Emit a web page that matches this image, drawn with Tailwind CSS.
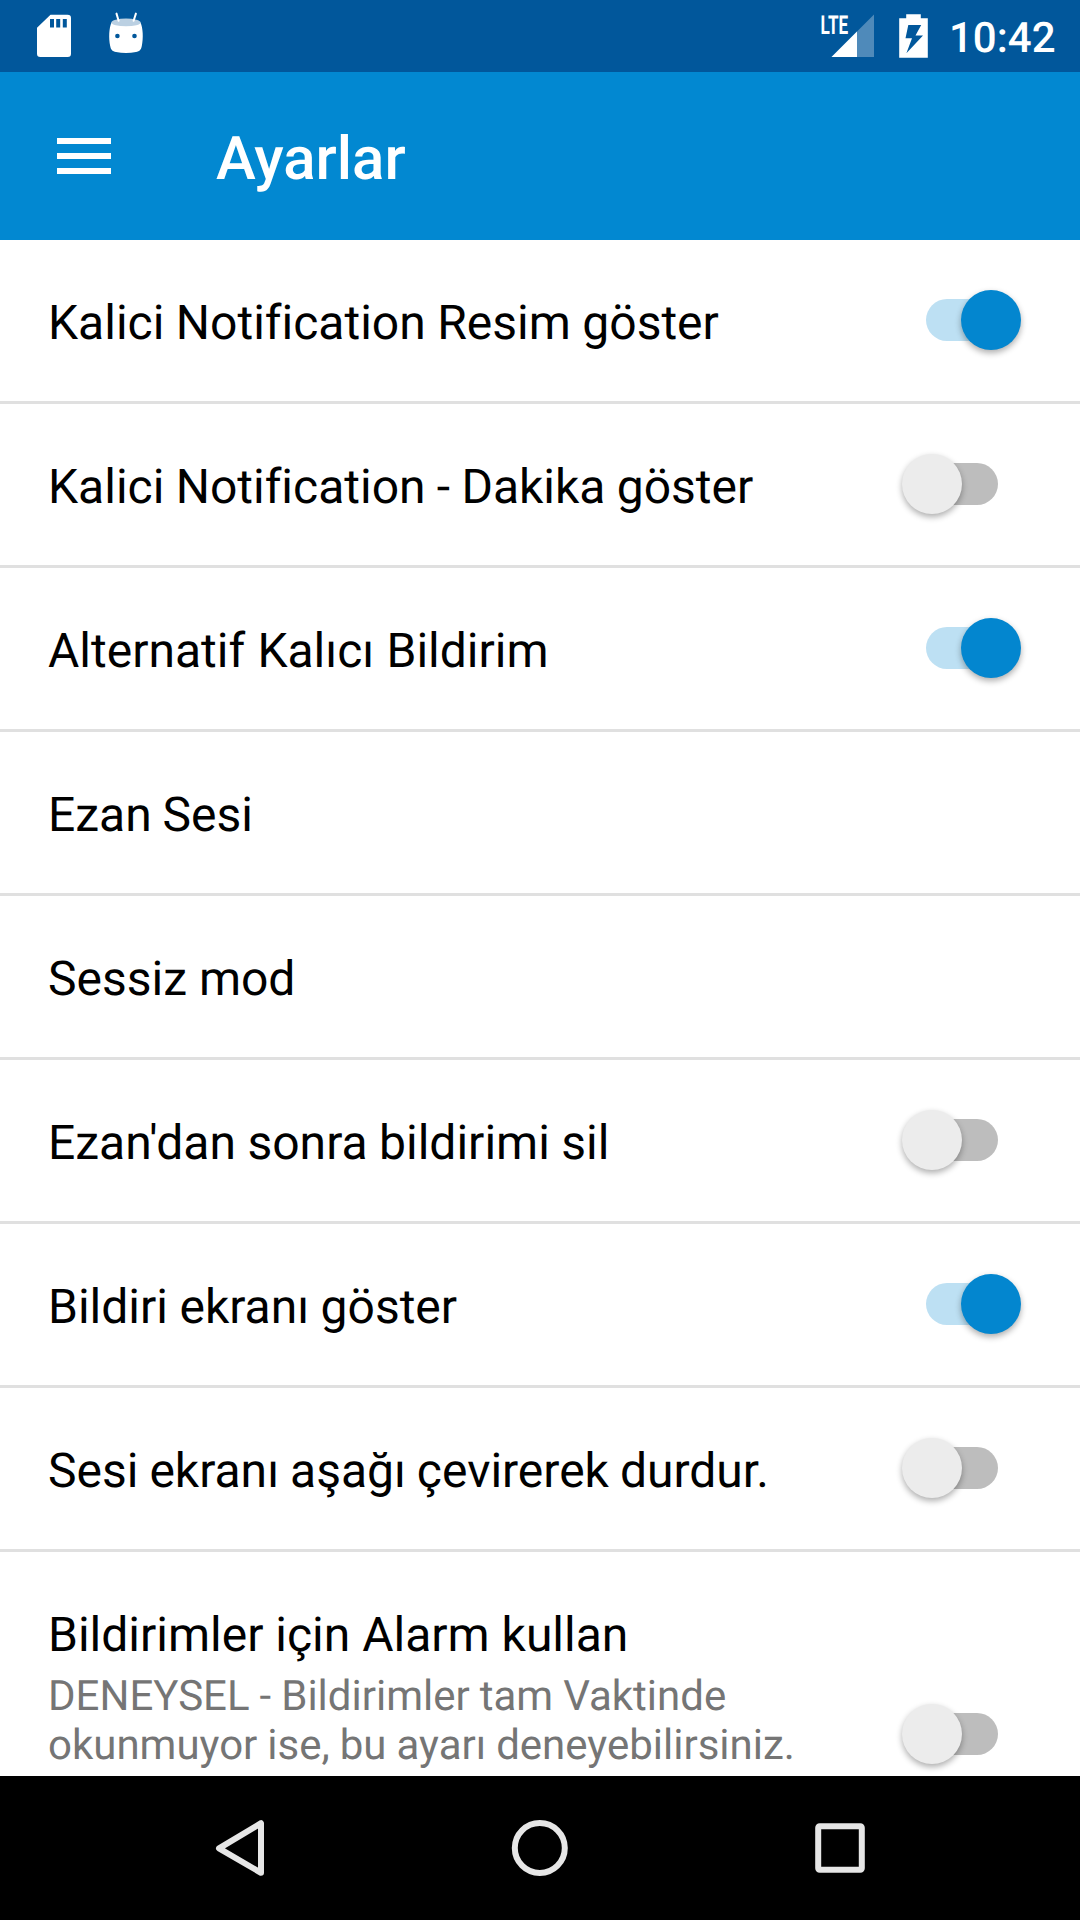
<!DOCTYPE html>
<html lang="tr">
<head>
<meta charset="utf-8">
<title>Ayarlar</title>
<script src="https://cdn.jsdelivr.net/npm/@tailwindcss/browser@4"></script>
</head>
<body class="bg-white">
<div class="w-[1080px] h-[1920px] flex flex-col overflow-hidden bg-white font-['Roboto',sans-serif] text-black [text-rendering:geometricPrecision]">
  <header class="h-[72px] shrink-0 bg-[#01579b] flex items-start text-white">
    <!-- SD card -->
    <svg class="ml-9 w-9 h-[72px]" viewBox="36 0 36 72" fill="#fff">
      <path fill-rule="evenodd" d="M50.5 14.7H67.5Q71 14.7 71 18V53.7Q71 57 67.7 57H40.3Q37 57 37 53.7V27.7ZM50 19V27.5H54V19ZM56.2 19V27.5H60.2V19ZM62.8 19V27.5H66.8V19Z"/>
    </svg>
    <!-- Android head -->
    <svg class="ml-9 w-9 h-[72px]" viewBox="108 0 36 72">
      <path fill="#fff" d="M111.5 22.5C109 28 108.5 38 110.2 46C111 50.3 112.6 51.2 116 52C122.5 53.3 129.5 53.3 136 52C139.5 51.2 140.9 50.3 141.8 46C143.5 38 143 28 140.5 22.5Z"/>
      <ellipse cx="126" cy="22.4" rx="14.6" ry="3.9" fill="#bbd0e2"/>
      <path d="M116.5 13.6L118.6 20.7M135.9 13.6L133.6 20.7" stroke="#fff" stroke-width="2" stroke-linecap="round"/>
      <g fill="#01579b"><circle cx="117.4" cy="36" r="2.3"/><circle cx="134.5" cy="36" r="2.3"/></g>
    </svg>
    <div class="flex-1"></div>
    <!-- Cell signal -->
    <svg class="w-14 h-[72px]" viewBox="820 0 56 72">
      <path d="M874 14.5V57H831.5Z" fill="#4f8aba"/>
      <path d="M857 31.5V57H831.5Z" fill="#fff"/>
      <text x="820.6" y="33.6" font-size="26" font-weight="700" fill="#fff" textLength="27.6" lengthAdjust="spacingAndGlyphs">LTE</text>
    </svg>
    <!-- Charging battery -->
    <svg class="ml-[23px] w-[29px] h-[72px]" viewBox="899 0 29 72">
      <path fill="#fff" fill-rule="evenodd" d="M906.2 14.3H920.8V18.2H927.8V57.7H899.2V18.2H906.2ZM908.3 25L905.5 38.3H912L906.4 53.3L923 35.5H915.5L921.2 25Z"/>
    </svg>
    <span class="ml-[21px] mr-[25px] w-[106px] pt-[11px] text-[42px] leading-[56px] font-medium whitespace-nowrap">10:42</span>
  </header>

  <div class="h-[168px] shrink-0 bg-[#0288d1] flex text-white">
    <svg class="ml-[57px] mt-[66px] w-[54px] h-9" viewBox="0 0 54 36" fill="#fff"><path d="M0 0H54V6H0ZM0 15H54V21H0ZM0 30H54V36H0Z"/></svg>
    <h1 class="ml-[105px] mt-[52px] text-[60px] leading-[70px] font-medium">Ayarlar</h1>
  </div>

  <main id="list" class="flex-1 min-h-0 overflow-hidden flex flex-col"></main>

  <nav class="h-36 shrink-0 bg-black">
    <svg class="w-full h-full" viewBox="0 0 1080 144" fill="none" stroke="#e6e6e6" stroke-width="6" stroke-linejoin="round">
      <path d="M261 47.2V72.5V96.8L219 72.3Z"/>
      <circle cx="539.8" cy="72" r="25"/>
      <rect x="818.2" y="50.2" width="43.6" height="43.6" rx="1.5"/>
    </svg>
  </nav>
</div>
<script>
  const rows = [
    { title: "Kalici Notification Resim göster", on: true, spacing: -0.4 },
    { title: "Kalici Notification - Dakika göster", on: false, spacing: -0.6 },
    { title: "Alternatif Kalıcı Bildirim", on: true, spacing: 0.4 },
    { title: "Ezan Sesi", spacing: -1 },
    { title: "Sessiz mod", spacing: 0 },
    { title: "Ezan'dan sonra bildirimi sil", on: false, spacing: -0.4 },
    { title: "Bildiri ekranı göster", on: true, spacing: -0.4 },
    { title: "Sesi ekranı aşağı çevirerek durdur.", on: false, spacing: -0.9 },
    { title: "Bildirimler için Alarm kullan", on: false, spacing: 0,
      note: "DENEYSEL - Bildirimler tam Vaktinde<br>okunmuyor ise, bu ayarı deneyebilirsiniz." }
  ];
  const toggle = on => `
    <div class="relative w-[119px] h-[60px] mr-[59px] mb-[1px] flex items-center justify-center">
      <div class="w-[72px] h-[42px] ml-px rounded-full ${on ? "bg-[#bde0f3]" : "bg-[#bdbdbd]"}"></div>
      <div class="absolute top-0 size-[60px] rounded-full shadow-[0_3px_6px_rgba(0,0,0,0.32)] ${on ? "right-0 bg-[#0386cf]" : "left-0 bg-[#ececec]"}"></div>
    </div>`;
  document.getElementById("list").innerHTML = rows.map(({ title, on, spacing, note }) => `
    <div class="shrink-0 flex items-center justify-between border-b-3 border-[#e0e0e0] ${note ? "h-[368px]" : "h-[164px]"}">
      <div class="self-start ml-12 pt-[54px] whitespace-nowrap">
        <div class="text-[48px] leading-[57px]" style="word-spacing:${spacing}px">${title}</div>
        ${note ? `<div class="mt-[9px] text-[42px] leading-[49px] text-[#757575] [word-spacing:-0.4px]">${note}</div>` : ""}
      </div>
      ${on === undefined ? "" : toggle(on)}
    </div>`).join("");
</script>
</body>
</html>
